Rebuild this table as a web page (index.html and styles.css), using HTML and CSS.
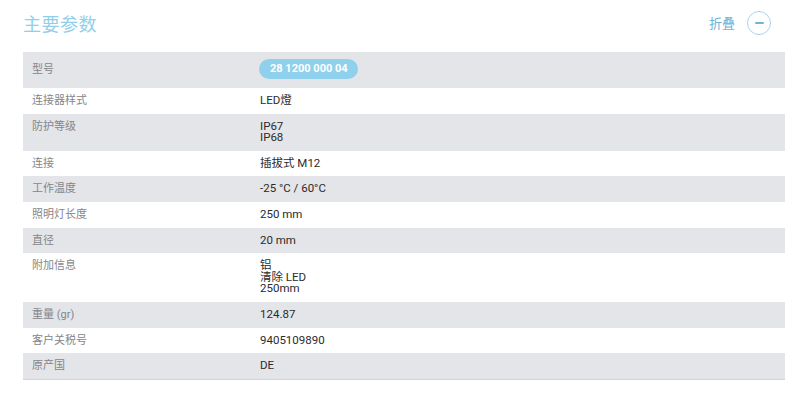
FILE: index.html
```html
<!DOCTYPE html>
<html lang="zh">
<head>
<meta charset="utf-8">
<link rel="stylesheet" href="styles.css">
</head>
<body>
<section class="params">
  <header class="params-head">
    <h2 class="params-title">主要参数</h2>
    <button class="toggle" type="button">
      <span class="toggle-label">折叠</span>
      <span class="toggle-icon"><span class="minus"></span></span>
    </button>
  </header>
  <div class="table">
    <div class="row shade pill-row"><div class="label">型号</div><div class="value"><span class="pill">28 1200 000 04</span></div></div>
    <div class="row"><div class="label">连接器样式</div><div class="value">LED燈</div></div>
    <div class="row shade"><div class="label">防护等级</div><div class="value">IP67<br>IP68</div></div>
    <div class="row"><div class="label">连接</div><div class="value">插拔式 M12</div></div>
    <div class="row shade"><div class="label">工作温度</div><div class="value">-25 °C / 60°C</div></div>
    <div class="row"><div class="label">照明灯长度</div><div class="value">250 mm</div></div>
    <div class="row shade"><div class="label">直径</div><div class="value">20 mm</div></div>
    <div class="row"><div class="label">附加信息</div><div class="value">铝<br>清除 LED<br>250mm</div></div>
    <div class="row shade"><div class="label">重量 (gr)</div><div class="value">124.87</div></div>
    <div class="row"><div class="label">客户关税号</div><div class="value">9405109890</div></div>
    <div class="row shade last"><div class="label">原产国</div><div class="value">DE</div></div>
  </div>
</section>
</body>
</html>
```
FILE: styles.css
```css
* { box-sizing: border-box; }
html, body { margin: 0; padding: 0; background: #ffffff; }
body {
  font-family: Roboto, "Noto Sans CJK SC", "Noto Sans", sans-serif;
  color: #333;
}
.params { padding: 0 15px 0 23px; }
.params-head {
  height: 52px;
  display: flex;
  align-items: center;
  justify-content: space-between;
  padding-bottom: 7px;
}
.params-title {
  margin: 0;
  font-size: 18px;
  font-weight: 400;
  color: #8fcfea;
  letter-spacing: 0.5px;
}
.toggle {
  display: flex;
  align-items: center;
  gap: 12px;
  background: none;
  border: 0;
  padding: 0;
  margin-right: 14px;
  font-family: inherit;
  cursor: pointer;
}
.toggle-label { font-size: 13px; color: #6db3d6; }
.toggle-icon {
  width: 24px; height: 24px;
  border: 1.5px solid #a6d6ec;
  border-radius: 50%;
  display: flex; align-items: center; justify-content: center;
}
.minus { width: 9px; height: 2px; background: #72b4d4; border-radius: 1px; }
.table { display: flex; flex-direction: column; }
.row {
  display: grid;
  grid-template-columns: 228px 1fr;
  padding: 7px 9px 7px;
  font-size: 11px;
  line-height: 11.6px;
}
.row.shade { background: #e4e5e9; }
.row.last { border-bottom: 1px solid #d3d4d8; }
.label { color: #85858a; }
.value { color: #2b2b2b; font-weight: 400; font-size: 11.5px; }
.pill-row { align-items: center; padding-top: 7px; padding-bottom: 9px; }
.pill-row .label { padding-top: 1px; }
.pill {
  display: inline-block;
  height: 20px;
  line-height: 20px;
  padding: 0 10px 0 11px;
  margin-left: -1px;
  border-radius: 10px;
  background: #8fd0ec;
  color: #fff;
  font-weight: 700;
  font-size: 11px;
}
```
